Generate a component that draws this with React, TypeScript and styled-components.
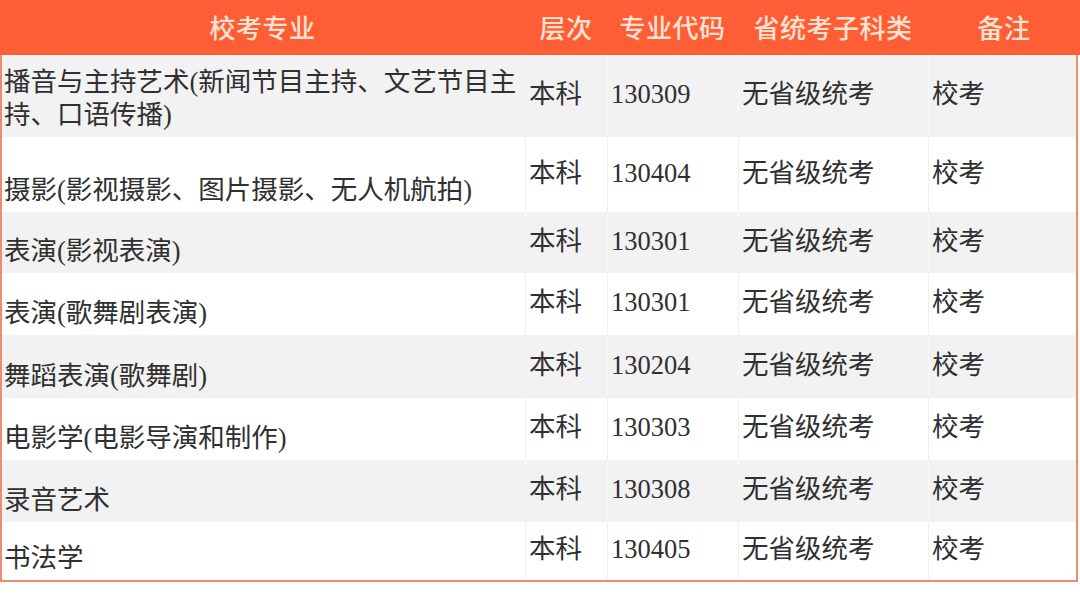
import React from "react";
import styled, { createGlobalStyle } from "styled-components";

const GlobalStyle = createGlobalStyle`
  html, body {
    margin: 0;
    padding: 0;
    background: #ffffff;
  }
  body {
    font-family: "Liberation Serif", "Noto Sans CJK SC", serif;
  }
`;

const COLUMNS = "523px 82px 131px 190px 1fr";

const Page = styled.div(() => ({
  width: 1080,
  height: 595,
  overflow: "hidden",
  background: "#ffffff",
}));

const HeaderRow = styled.div(() => ({
  display: "grid",
  gridTemplateColumns: `525px 82px 131px 190px 1fr`,
  height: 55,
  background: "#fe5e36",
}));

const HeaderCell = styled.div(() => ({
  display: "flex",
  alignItems: "center",
  justifyContent: "center",
  paddingBottom: 2,
  color: "#ffe2d2",
  fontFamily: '"Noto Sans CJK SC", sans-serif',
  fontSize: 26,
  fontWeight: 500,
  letterSpacing: 0.5,
}));

const Body = styled.div(() => ({
  width: 1078,
  boxSizing: "border-box",
  borderLeft: "2px solid #ec8d72",
  borderRight: "2px solid #ec8d72",
  borderBottom: "2px solid #ec8d72",
}));

const Row = styled.div<{ $shaded: boolean; $height: number }>(
  ({ $shaded, $height }) => ({
    display: "grid",
    gridTemplateColumns: COLUMNS,
    height: $height,
    background: $shaded ? "#f2f2f2" : "#ffffff",
  })
);

const Cell = styled.div<{ $shaded: boolean; $first?: boolean }>(
  ({ $shaded, $first }) => ({
    display: "flex",
    alignItems: $first ? "flex-end" : "center",
    padding: $first ? "0 2px 5px 2px" : "0 0 3px 3px",
    borderLeft: $first ? "none" : `1px solid ${$shaded ? "#f8f8f8" : "#efefef"}`,
    color: "#303030",
    fontSize: 26.5,
    lineHeight: "33px",
    overflow: "hidden",
  })
);

const headers = ["校考专业", "层次", "专业代码", "省统考子科类", "备注"];

const rows = [
  { name: "播音与主持艺术(新闻节目主持、文艺节目主持、口语传播)", code: "130309", h: 82 },
  { name: "摄影(影视摄影、图片摄影、无人机航拍)", code: "130404", h: 75 },
  { name: "表演(影视表演)", code: "130301", h: 61 },
  { name: "表演(歌舞剧表演)", code: "130301", h: 62 },
  { name: "舞蹈表演(歌舞剧)", code: "130204", h: 63 },
  { name: "电影学(电影导演和制作)", code: "130303", h: 62 },
  { name: "录音艺术", code: "130308", h: 62 },
  { name: "书法学", code: "130405", h: 58 },
];

export default function App() {
  return (
    <Page>
      <GlobalStyle />
      <HeaderRow>
        {headers.map((h) => (
          <HeaderCell key={h}>{h}</HeaderCell>
        ))}
      </HeaderRow>
      <Body>
        {rows.map((r, i) => {
          const shaded = i % 2 === 0;
          return (
            <Row key={i} $shaded={shaded} $height={r.h}>
              <Cell $shaded={shaded} $first>
                <span>{r.name}</span>
              </Cell>
              <Cell $shaded={shaded}>本科</Cell>
              <Cell $shaded={shaded}>{r.code}</Cell>
              <Cell $shaded={shaded}>无省级统考</Cell>
              <Cell $shaded={shaded}>校考</Cell>
            </Row>
          );
        })}
      </Body>
    </Page>
  );
}
